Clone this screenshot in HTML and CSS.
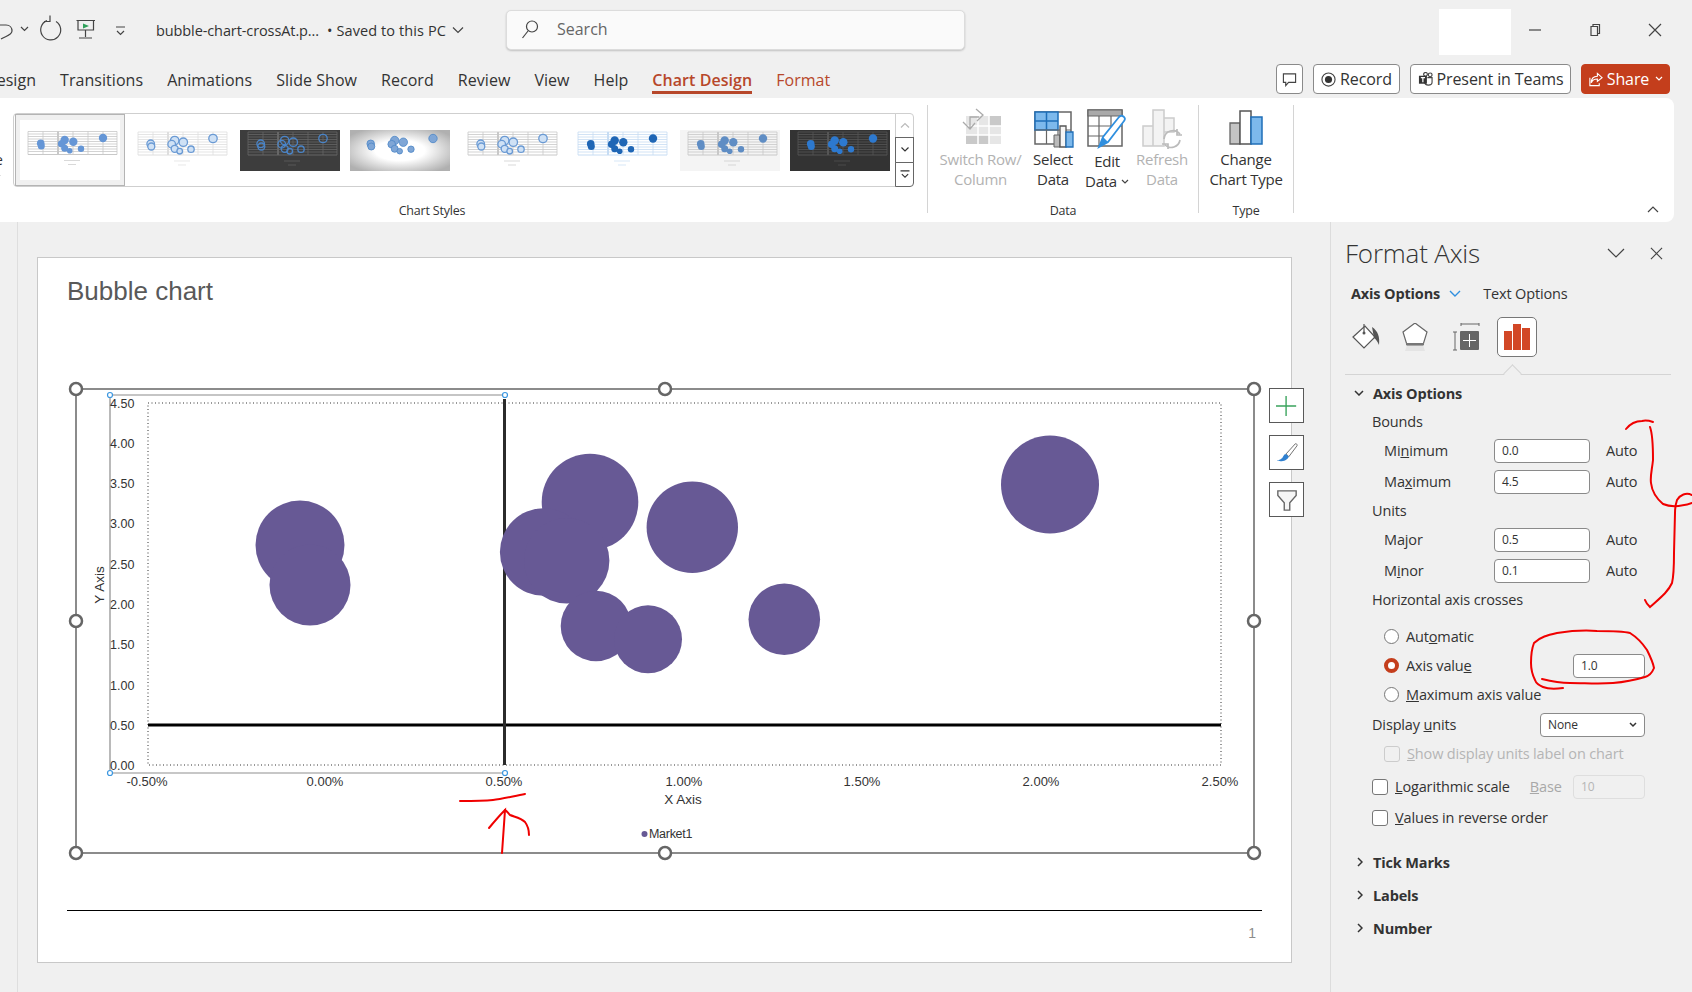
FILE: index.html
```html
<!DOCTYPE html>
<html lang="en">
<head>
  <meta charset="UTF-8" />
  <title>bubble-chart-crossAt - PowerPoint</title>
  <link rel="stylesheet" href="styles.css">
</head>
<body>
  <!-- shared parts of the chart style previews -->
  <svg class="defs" aria-hidden="true">
    <defs>
      <symbol id="mini-grid" viewBox="0 0 100 41">
        <path d="M8 2H97M8 4.500H97M8 7H97M8 9.500H97M8 12H97M8 14.500H97M8 17H97M8 19.500H97M8 22H97" stroke-width=".8"/>
        <path d="M8 2V25M23 2V25M53 2V25M68 2V25M83 2V25M97 2V25" stroke-width=".8"/>
        <path d="M38 2V25" stroke-width="2"/>
        <path d="M8 25H97" stroke-width="1"/>
        <path d="M44 31H60M48 35H56" stroke-width=".7"/>
      </symbol>
      <symbol id="mini-dots" viewBox="0 0 100 41">
        <circle cx="20.700" cy="13.800" r="3.800"/><circle cx="21.300" cy="16.500" r="3.500"/>
        <circle cx="44.700" cy="10.500" r="4.200"/><circle cx="41.700" cy="14.200" r="3.800"/>
        <circle cx="44.700" cy="18.800" r="3.500"/><circle cx="49.700" cy="21.200" r="2.800"/>
        <circle cx="53.300" cy="12.200" r="4.200"/><circle cx="61" cy="19.200" r="3.200"/>
        <circle cx="83" cy="8.500" r="4.200"/>
      </symbol>
      <radialGradient id="mini-glow" cx=".5" cy=".5" r=".62">
        <stop offset=".4" stop-color="#fff"/><stop offset="1" stop-color="#b0b0b0"/>
      </radialGradient>
    </defs>
  </svg>

  <!-- Barra de titulo -->
  <header class="titlebar">
    <svg class="quick-icons" viewBox="0 0 140 60" aria-hidden="true">
      <path d="M-3 25H6C10 25 12 28 12 31C12 35 6 36 1 39" class="ico-line"/>
      <path d="M21 27l3.500 3.500 3.500-3.500" class="ico-line"/>
      <path d="M47 20.600A10 10 0 1 0 56 21.400M50 15.500V21.500H44" class="ico-line"/>
      <path d="M76.500 20.500H95M78 20.500V30H93.500V20.500M85.500 30V37M79 38H92" class="ico-line"/>
      <path d="M83 23.500L89 26L83 28.500Z" fill="#2ea05a"/>
      <path d="M116 27H125M117 31l3.500 3.500 3.500-3.500" class="ico-line"/>
    </svg>
    <div class="doc-name">bubble-chart-crossAt.p...</div>
    <div class="doc-saved">• Saved to this PC</div>
    <svg class="doc-caret" viewBox="0 0 12 8" aria-hidden="true"><path d="M1 1.500l5 5 5-5" class="ico-line"/></svg>
    <div class="search">
      <svg class="search-ico" viewBox="0 0 18 20" aria-hidden="true"><circle cx="11" cy="7.500" r="5.500" class="ico-line"/><path d="M7 12L1.500 19" class="ico-line"/></svg>
      <span>Search</span>
    </div>
    <div class="account"></div>
    <svg class="win-ico win-min" viewBox="0 0 14 14" aria-hidden="true"><path d="M1 7H13" class="ico-line"/></svg>
    <svg class="win-ico win-max" viewBox="0 0 14 14" aria-hidden="true"><path d="M3 3.500H9.500V12.500H3ZM5 3.500V1.500H11.500V10.500H9.500" class="ico-line"/></svg>
    <svg class="win-ico win-close" viewBox="0 0 14 14" aria-hidden="true"><path d="M1 1L13 13M13 1L1 13" class="ico-line"/></svg>
  </header>

  <!-- Pestanas -->
  <nav class="tabbar">
    <div class="tabs">
      <span class="tab tab-cut">Design</span>
      <span class="tab">Transitions</span>
      <span class="tab">Animations</span>
      <span class="tab">Slide Show</span>
      <span class="tab">Record</span>
      <span class="tab">Review</span>
      <span class="tab">View</span>
      <span class="tab">Help</span>
      <span class="tab tab-on">Chart Design</span>
      <span class="tab tab-ctx">Format</span>
    </div>
    <div class="actions">
      <button class="act act-comment"><svg viewBox="0 0 16 16" class="act-ico" aria-hidden="true"><path d="M1.500 2H14.500V11H7L4 14.500V11H1.500Z" class="ico-line"/></svg></button>
      <button class="act act-record"><svg viewBox="0 0 16 16" class="act-ico" aria-hidden="true"><circle cx="8" cy="8" r="7" class="ico-line"/><circle cx="8" cy="8" r="3.800" fill="#333"/></svg>Record</button>
      <button class="act act-teams"><svg viewBox="0 0 16 16" class="act-ico" aria-hidden="true"><circle cx="13" cy="3" r="2" class="ico-line"/><circle cx="8" cy="2.500" r="2" class="ico-line"/><path d="M10 6H15V11C15 13 13 14 11 14C9 14 7.500 13 7 11" class="ico-line"/><path d="M1 4H9.500V12.500H1Z" fill="#333"/><path d="M3 6H7.500M5.200 6V11" stroke="#fff" stroke-width="1.300"/></svg>Present in Teams</button>
      <button class="act act-share"><svg viewBox="0 0 16 16" class="act-ico" aria-hidden="true"><path d="M10 1.500L15 6L10 10V7.500C6 7.500 4.500 9 3.500 11.500C3.500 7 6 4.500 10 4.500ZM2 6V14.500H12V12" class="ico-white"/></svg>Share<svg viewBox="0 0 8 6" class="share-caret" aria-hidden="true"><path d="M1 1l3 3 3-3" class="ico-white"/></svg></button>
    </div>
  </nav>

  <!-- Cinta -->
  <section class="ribbon">
    <div class="rb-group rb-styles">
      <div class="cut-off">e<svg viewBox="0 0 8 6" aria-hidden="true"><path d="M1 1l3 3 3-3" class="ico-line"/></svg></div>
      <div class="gallery">
        <div class="style-tile tile-on">
          <svg class="mini mini-plain" viewBox="0 -9.500 100 60"><use class="m-grid" href="#mini-grid" width="100" height="41"/><use class="m-dots" href="#mini-dots" width="100" height="41"/></svg>
        </div>
        <div class="style-tile">
          <svg class="mini mini-hatch" viewBox="0 0 100 41"><use class="m-grid" href="#mini-grid"/><use class="m-dots" href="#mini-dots"/></svg>
        </div>
        <div class="style-tile">
          <svg class="mini mini-dark" viewBox="0 0 100 41"><rect width="100" height="41" fill="#3d3d3d"/><use class="m-grid" href="#mini-grid"/><use class="m-dots" href="#mini-dots"/></svg>
        </div>
        <div class="style-tile">
          <svg class="mini mini-glow" viewBox="0 0 100 41"><rect width="100" height="41" fill="url(#mini-glow)"/><use class="m-dots" href="#mini-dots"/></svg>
        </div>
        <div class="style-tile">
          <svg class="mini mini-ring" viewBox="0 0 100 41"><use class="m-grid" href="#mini-grid"/><use class="m-dots" href="#mini-dots"/></svg>
        </div>
        <div class="style-tile">
          <svg class="mini mini-solid" viewBox="0 0 100 41"><use class="m-grid" href="#mini-grid"/><use class="m-dots" href="#mini-dots"/></svg>
        </div>
        <div class="style-tile">
          <svg class="mini mini-soft" viewBox="0 0 100 41"><use class="m-grid" href="#mini-grid"/><use class="m-dots" href="#mini-dots"/></svg>
        </div>
        <div class="style-tile">
          <svg class="mini mini-night" viewBox="0 0 100 41"><rect width="100" height="41" fill="#333"/><use class="m-grid" href="#mini-grid"/><use class="m-dots" href="#mini-dots"/></svg>
        </div>
        <div class="gallery-scroll">
          <span class="scroll-btn scroll-off"><svg viewBox="0 0 10 6" aria-hidden="true"><path d="M1 5l4-4 4 4"/></svg></span>
          <span class="scroll-btn"><svg viewBox="0 0 10 6" aria-hidden="true"><path d="M1.500 1l3.500 3.500L8.500 1"/></svg></span>
          <span class="scroll-btn"><svg viewBox="0 0 10 10" aria-hidden="true"><path d="M0 1H10M1.500 4.500L5 8L8.500 4.500"/></svg></span>
        </div>
      </div>
      <div class="rb-label rb-label-styles">Chart Styles</div>
    </div>

    <div class="rb-group rb-data">
      <div class="rb-items">
        <div class="rb-btn rb-off w-switch">
          <svg class="rb-ico" viewBox="0 0 44 42" aria-hidden="true">
            <path d="M7 8H42V36H7Z" fill="#e6e6e6"/><path d="M7 27H30V36H7ZM30 8H42V18H30Z" fill="#c9c9c9"/>
            <path d="M7 18H42M7 27H42M19 8V36M30 8V36" stroke="#fff" stroke-width="1.500"/>
            <path d="M4 14L11 21L16 15M11 20V9H20M17 1L24 7L18 13" fill="none" stroke="#aaa" stroke-width="1.300"/>
          </svg>
          <span>Switch Row/<br>Column</span>
        </div>
        <div class="rb-btn w-select">
          <svg class="rb-ico" viewBox="0 0 44 42" aria-hidden="true">
            <path d="M4 4H40V36H4Z" fill="#fff" stroke="#666" stroke-width="1.500"/>
            <path d="M4 4H27V22H4Z" fill="#7db9ec" stroke="#1f6fb8" stroke-width="1.500"/>
            <path d="M15.500 4V22M4 13H27" stroke="#1f6fb8" stroke-width="1.500"/>
            <path d="M27 22V36M15.500 22V36M4 22H40" stroke="#666" stroke-width="1.200"/>
            <path d="M23 27H29V39H23Z" fill="#bbb" stroke="#666"/><path d="M29 18H35V39H29Z" fill="#f5f5f5" stroke="#555" stroke-width="1.300"/>
            <path d="M35 24H42V39H35Z" fill="#7db9ec" stroke="#1f6fb8" stroke-width="1.300"/>
          </svg>
          <span>Select<br>Data</span>
        </div>
        <div class="rb-btn w-edit">
          <svg class="rb-ico" viewBox="0 0 44 42" aria-hidden="true">
            <path d="M3 2H37V38H3Z" fill="#fff" stroke="#666" stroke-width="1.500"/>
            <path d="M3 2H37V8H3Z" fill="#aaa" stroke="#666" stroke-width="1.200"/>
            <path d="M3 18H37M3 28H27M14 8V38M26 8V30" stroke="#666" stroke-width="1.200"/>
            <path d="M14 39L18 29L34 9C37 6 42 10 39 13L23 34Z" fill="#fff" stroke="#2f8fdf" stroke-width="1.800"/>
            <path d="M14 39L18 29L23 34Z" fill="#2f8fdf"/>
          </svg>
          <span class="edit-text">Edit<br>Data<svg class="data-caret" viewBox="0 0 8 6" aria-hidden="true"><path d="M1 1l3 3 3-3" class="ico-line"/></svg></span>
        </div>
        <div class="rb-btn rb-off w-refresh">
          <svg class="rb-ico" viewBox="0 0 44 42" aria-hidden="true">
            <path d="M3 18H13V38H3ZM13 2H24V38H13ZM24 10H34V24H24Z" fill="#f3f3f3" stroke="#ccc" stroke-width="1.500"/>
            <path d="M24 31A9 9 0 0 1 40 26M40 32A9 9 0 0 1 25 37M37 21V27H42M28 41V36H22" fill="none" stroke="#bbb" stroke-width="1.700"/>
          </svg>
          <span>Refresh<br>Data</span>
        </div>
      </div>
      <div class="rb-label rb-label-data">Data</div>
    </div>

    <div class="rb-group rb-type">
      <div class="rb-items">
        <div class="rb-btn w-type">
          <svg class="rb-ico" viewBox="0 0 44 42" aria-hidden="true">
            <path d="M6 15H16V36H6Z" fill="#c4c4c4" stroke="#666" stroke-width="1.300"/>
            <path d="M16 3H27V36H16Z" fill="#fff" stroke="#555" stroke-width="1.500"/>
            <path d="M27 9H38V36H27Z" fill="#7db9ec" stroke="#1f6fb8" stroke-width="1.500"/>
          </svg>
          <span>Change<br>Chart Type</span>
        </div>
      </div>
      <div class="rb-label">Type</div>
    </div>

    <svg class="rb-collapse" viewBox="0 0 12 7" aria-hidden="true"><path d="M1 6l5-5 5 5" class="ico-line"/></svg>
  </section>

  <main class="workspace">
    <div class="thumb-pane"></div>

    <div class="stage">
      <article class="slide">
        <h1 class="slide-title">Bubble chart</h1>

        <div class="chart-wrap">
          <svg class="chart" viewBox="70 383 1190 475" role="img" aria-label="Bubble chart">
            <path d="M76 389H1254V853H76Z" class="frame"/>
            <path d="M110 395H505M110 395V773" class="axis-box"/>
            <path d="M110 773H505" class="axis-box-low"/>
            <rect x="148" y="403" width="1073" height="362" class="plot"/>

            <path d="M148 725H1221" class="cross-h"/>
            <path d="M504.500 399V765" class="cross-v"/>

            <g class="bubbles">
              <circle cx="300" cy="545" r="44.500"/>
              <circle cx="310" cy="585" r="40.500"/>
              <circle cx="590" cy="502" r="48.300"/>
              <circle cx="543.700" cy="552" r="43.800"/>
              <circle cx="566.700" cy="560.700" r="42.700"/>
              <circle cx="692.300" cy="527.300" r="45.700"/>
              <circle cx="596" cy="626" r="35.300"/>
              <circle cx="648" cy="639.300" r="34"/>
              <circle cx="784.300" cy="619.300" r="35.800"/>
              <circle cx="1050" cy="484.500" r="49"/>
            </g>

            <g class="tick-y">
              <text x="110" y="404">4.50</text>
              <text x="110" y="444">4.00</text>
              <text x="110" y="484">3.50</text>
              <text x="110" y="524">3.00</text>
              <text x="110" y="565">2.50</text>
              <text x="110" y="605">2.00</text>
              <text x="110" y="645">1.50</text>
              <text x="110" y="686">1.00</text>
              <text x="110" y="726">0.50</text>
              <text x="110" y="766">0.00</text>
            </g>
            <g class="tick-x">
              <text x="147" y="781">-0.50%</text>
              <text x="325" y="781">0.00%</text>
              <text x="504" y="781">0.50%</text>
              <text x="684" y="781">1.00%</text>
              <text x="862" y="781">1.50%</text>
              <text x="1041" y="781">2.00%</text>
              <text x="1220" y="781">2.50%</text>
            </g>
            <text x="683" y="799" class="axis-title">X Axis</text>
            <text class="axis-title" transform="translate(99 585) rotate(-90)">Y Axis</text>
            <circle cx="644.500" cy="834" r="3" class="legend-dot"/>
            <text x="649" y="834" class="legend">Market1</text>

            <g class="sel-dots">
              <circle cx="110" cy="395" r="2.500"/><circle cx="505" cy="395" r="2.500"/>
              <circle cx="110" cy="773" r="2.500"/><circle cx="505" cy="773" r="2.500"/>
            </g>
            <g class="handles">
              <circle cx="76" cy="389" r="6"/><circle cx="665" cy="389" r="6"/><circle cx="1254" cy="389" r="6"/>
              <circle cx="76" cy="621" r="6"/><circle cx="1254" cy="621" r="6"/>
              <circle cx="76" cy="853" r="6"/><circle cx="665" cy="853" r="6"/><circle cx="1254" cy="853" r="6"/>
            </g>
          </svg>

          <div class="chart-tools">
            <span class="tool"><svg viewBox="0 0 24 24" aria-hidden="true"><path d="M11 1V23M0 12H22" stroke="#3aa35c" stroke-width="1.500"/></svg></span>
            <span class="tool"><svg viewBox="0 0 24 24" aria-hidden="true"><path d="M21 2L11 13L14 16L23 4C23 2 22 1.500 21 2Z" fill="#fff" stroke="#666"/><path d="M11 13C8 13 8 17 6 18C5 19 3 20 1 20C4 22 12 21 14 16Z" fill="#2f80d0"/></svg></span>
            <span class="tool"><svg viewBox="0 0 24 24" aria-hidden="true"><path d="M2 2H22V7L15 15V23H9V15L2 7Z" fill="#f6f6f6" stroke="#666" stroke-width="1.500"/></svg></span>
          </div>
        </div>

        <footer class="slide-foot">
          <span class="page-no">1</span>
        </footer>
      </article>
    </div>

    <!-- Panel lateral -->
    <aside class="panel">
      <div class="panel-head">
        <span class="panel-title">Format Axis</span>
        <svg class="panel-ctl ctl-caret" viewBox="0 0 18 10" aria-hidden="true"><path d="M1 1l8 8 8-8" class="ico-line"/></svg>
        <svg class="panel-ctl ctl-close" viewBox="0 0 14 14" aria-hidden="true"><path d="M1 1L13 13M13 1L1 13" class="ico-line"/></svg>
      </div>
      <div class="panel-modes">
        <b>Axis Options</b>
        <svg class="mode-caret" viewBox="0 0 12 7" aria-hidden="true"><path d="M1 1l5 5 5-5"/></svg>
        <span>Text Options</span>
      </div>
      <div class="panel-icons">
        <span class="p-ico p-ico-fill"><svg viewBox="0 0 28 28" aria-hidden="true"><path d="M1 14L13 3L23 14L12 25Z" fill="#fff" stroke="#555" stroke-width="1.200"/><path d="M12 1V10" stroke="#555" stroke-width="1.200"/><circle cx="12" cy="10" r="1.500" fill="#555"/><path d="M20 4C26 8 28 14 27 22C25 18 24 16 22 15Z" fill="#555"/></svg></span>
        <span class="p-ico p-ico-shape"><svg viewBox="0 0 28 28" aria-hidden="true"><path d="M6 22L4 28H24L22 22Z" fill="#e4e4e4"/><path d="M14 0L26 9L22 22H6L2 9Z" fill="#fff" stroke="#666" stroke-width="1.200"/><path d="M5 21H23" stroke="#777" stroke-width="2"/></svg></span>
        <span class="p-ico p-ico-size"><svg viewBox="0 0 28 28" aria-hidden="true"><path d="M9 1H27M9 0V3M27 0V3M1 9H5M1 27H5M3 9V27" stroke="#666" fill="none"/><rect x="8" y="8" width="19" height="19" rx="1" fill="#666"/><path d="M17.500 11V24M11 17.500H24" stroke="#fff"/></svg></span>
        <span class="p-ico p-ico-bars"><svg viewBox="0 0 28 28" aria-hidden="true"><path d="M1 8H9V27H1ZM10 1H18V27H10ZM19 5H27V27H19Z" fill="#d24726"/></svg></span>
      </div>
      <div class="panel-rule"></div>

      <div class="sec-head sec-open">
        <svg viewBox="0 0 10 6" aria-hidden="true"><path d="M1 1l4 4 4-4" class="ico-dark"/></svg>
        <b>Axis Options</b>
      </div>
      <div class="f-sub f-bounds">Bounds</div>
      <div class="f-row"><label>Mi<u>n</u>imum</label><span class="field">0.0</span><span class="f-auto">Auto</span></div>
      <div class="f-row"><label>Ma<u>x</u>imum</label><span class="field">4.5</span><span class="f-auto">Auto</span></div>
      <div class="f-sub">Units</div>
      <div class="f-row"><label>Ma<u>j</u>or</label><span class="field">0.5</span><span class="f-auto">Auto</span></div>
      <div class="f-row"><label>M<u>i</u>nor</label><span class="field">0.1</span><span class="f-auto">Auto</span></div>
      <div class="f-sub">Horizontal axis crosses</div>

      <div class="f-radio f-radio-first"><span class="radio"></span><span>Aut<u>o</u>matic</span></div>
      <div class="f-radio"><span class="radio radio-on"></span><span>Axis valu<u>e</u></span><span class="field field-wide">1.0</span></div>
      <div class="f-radio"><span class="radio"></span><span><u>M</u>aximum axis value</span></div>

      <div class="f-units"><span>Display <u>u</u>nits</span><span class="select">None<svg viewBox="0 0 8 6" aria-hidden="true"><path d="M1 1l3 3 3-3" class="ico-dark"/></svg></span></div>
      <div class="f-check f-check-sub f-disabled"><span class="check"></span><span><u>S</u>how display units label on chart</span></div>
      <div class="f-check f-check-log"><span class="check check-on"></span><span><u>L</u>ogarithmic scale</span><span class="f-base"><u>B</u>ase</span><span class="field field-wide field-off">10</span></div>
      <div class="f-check"><span class="check check-on"></span><span><u>V</u>alues in reverse order</span></div>

      <div class="sec-head sec-closed sec-first"><svg viewBox="0 0 6 10" aria-hidden="true"><path d="M1 1l4 4-4 4" class="ico-dark"/></svg><b>Tick Marks</b></div>
      <div class="sec-head sec-closed"><svg viewBox="0 0 6 10" aria-hidden="true"><path d="M1 1l4 4-4 4" class="ico-dark"/></svg><b>Labels</b></div>
      <div class="sec-head sec-closed"><svg viewBox="0 0 6 10" aria-hidden="true"><path d="M1 1l4 4-4 4" class="ico-dark"/></svg><b>Number</b></div>
    </aside>
  </main>

  <!-- Anotaciones a mano encima de la captura -->
  <svg class="scribbles" viewBox="0 0 1692 992" aria-hidden="true">
    <path d="M1626 429C1630 424 1636 421 1642 421C1646 420 1650 421 1653 422"/>
    <path d="M1650 427C1653 435 1653 448 1653 460C1652 470 1650 476 1651 483C1652 492 1656 498 1663 504C1670 507 1680 507 1692 503"/>
    <path d="M1692 495C1686 492 1680 495 1677 500C1675 506 1675 510 1675 513L1674 553C1674 565 1674 575 1672 583C1668 592 1660 598 1650 607C1648 605 1646 603 1645 600"/>
    <path d="M1563 688C1555 689 1548 689 1543 687C1538 685 1536 683 1535 680C1532 674 1531 668 1531 663C1531 655 1532 648 1534 643C1540 637 1548 635 1557 633C1570 631 1585 630 1597 631C1610 631 1622 631 1630 633C1638 638 1643 644 1647 650C1650 656 1653 662 1654 668C1652 673 1649 676 1645 677C1635 680 1625 682 1613 683C1598 684 1585 683 1570 683C1560 683 1550 681 1542 679"/>
    <path d="M460 801C472 801 483 801 493 800C502 799 514 796 525 794"/>
    <path d="M502 853C503 838 504 824 505 810C500 815 494 822 489 828"/>
    <path d="M505 810C507 811 508 813 510 815C515 817 521 818 525 822C528 826 529 830 529 835"/>
  </svg>
</body>
</html>
```

FILE: styles.css
```css
/* Colores de la ventana */
:root {
  --chrome: #f0f0f0;
  --ink: #333333;
  --accent: #b7472a;
  --share: #c43e1c;
  --line: #d4d4d4;
  --ui-font: "Open Sans", "Noto Sans", sans-serif;
  --chart-font: "Liberation Sans", Arial, sans-serif;
}

html, body {
  height: 100%;
  margin: 0;
}
body {
  position: relative;
  display: flex;
  flex-direction: column;
  width: 1692px;
  height: 992px;
  overflow: hidden;
  background-color: var(--chrome);
  color: var(--ink);
  font-family: var(--ui-font);
  font-size: 14px;
}

.defs {
  position: absolute;
  width: 0;
  height: 0;
}

.ico-line {
  fill: none;
  stroke: #444;
  stroke-width: 1.2;
}
.ico-dark {
  fill: none;
  stroke: #333;
  stroke-width: 1.5;
}
.ico-white {
  fill: none;
  stroke: #fff;
  stroke-width: 1.2;
}

/* Barra de titulo */
.titlebar {
  display: flex;
  align-items: center;
  flex: none;
  height: 60px;
}
.quick-icons {
  flex: none;
  width: 140px;
  height: 60px;
}
.doc-name {
  margin-left: 16px;
  font-size: 14.5px;
  letter-spacing: -0.1px;
  white-space: nowrap;
}
.doc-saved {
  margin-left: 8px;
  font-size: 14.5px;
  letter-spacing: 0.1px;
  white-space: nowrap;
}
.doc-caret {
  width: 12px;
  height: 8px;
  margin-left: 6px;
}
.search {
  display: flex;
  align-items: center;
  flex: none;
  box-sizing: border-box;
  width: 459px;
  height: 40px;
  margin-left: 42px;
  padding: 0 0 2px 14px;
  border: 1px solid #dcdcdc;
  border-radius: 5px;
  background-color: #fafafa;
  box-shadow: 0 1px 2px rgba(0, 0, 0, 0.2);
  color: #666;
  font-size: 16px;
}
.search-ico {
  width: 18px;
  height: 20px;
  margin-right: 18px;
}
.account {
  flex: none;
  width: 72px;
  height: 46px;
  margin: 4px 0 0 474px;
  background-color: #fff;
}
.win-ico {
  flex: none;
  width: 14px;
  height: 14px;
}
.win-min {
  margin-left: 17px;
}
.win-max {
  margin-left: 46px;
}
.win-close {
  margin-left: 46px;
}

/* Pestanas */
.tabbar {
  display: flex;
  align-items: center;
  justify-content: space-between;
  flex: none;
  height: 38px;
  overflow: hidden;
}
.tabs {
  display: flex;
  align-items: center;
  gap: 24px;
  height: 100%;
  margin: 2px 0 0 -15px;
}
.tab {
  position: relative;
  font-size: 16px;
  letter-spacing: 0.05px;
  white-space: nowrap;
}
.tab-on {
  color: var(--accent);
  font-weight: 600;
}
.tab-on::after {
  content: "";
  position: absolute;
  left: 0;
  right: 0;
  bottom: -3px;
  height: 3px;
  background-color: var(--accent);
}
.tab-ctx {
  color: var(--accent);
}
.actions {
  display: flex;
  gap: 10px;
  margin-right: 22px;
}
.act {
  display: flex;
  align-items: center;
  justify-content: center;
  box-sizing: border-box;
  height: 30px;
  padding: 0;
  border: 1px solid #8a8a8a;
  border-radius: 4px;
  background-color: #fff;
  color: var(--ink);
  font-family: var(--ui-font);
  font-size: 16px;
  letter-spacing: -0.1px;
}
.act-ico {
  width: 15px;
  height: 15px;
  margin-right: 4px;
}
.act-comment {
  width: 27px;
}
.act-comment .act-ico {
  margin: 0;
}
.act-record {
  width: 87px;
}
.act-teams {
  width: 161px;
}
.act-share {
  width: 89px;
  border-color: var(--share);
  background-color: var(--share);
  color: #fff;
}
.share-caret {
  width: 8px;
  height: 6px;
  margin-left: 6px;
}

/* Cinta */
.ribbon {
  position: relative;
  display: flex;
  flex: none;
  box-sizing: border-box;
  height: 124px;
  margin-right: 18px;
  padding-top: 7px;
  border-radius: 0 8px 8px 0;
  background-color: #fff;
}
.rb-group {
  display: flex;
  flex-direction: column;
  box-sizing: border-box;
  height: 108px;
  border-right: 1px solid var(--line);
}
.rb-label {
  margin-top: auto;
  font-size: 12.5px;
  line-height: 16px;
  text-align: center;
  letter-spacing: -0.2px;
  transform: translateY(6px);
}
.rb-styles {
  position: relative;
  width: 928px;
  padding: 8px 0 0 13px;
}
.rb-label-styles {
  padding-right: 76px;
}
.cut-off {
  position: absolute;
  left: -5px;
  top: 45px;
  width: 10px;
  font-size: 14px;
  line-height: 20px;
}
.cut-off svg {
  display: block;
  width: 8px;
  height: 6px;
  margin: 4px 0 0 -2px;
}
.gallery {
  display: flex;
  box-sizing: border-box;
  width: 900px;
  height: 74px;
  padding-left: 1px;
  border: 1px solid #cfcfcf;
  border-radius: 4px;
}
.style-tile {
  display: flex;
  align-items: center;
  justify-content: center;
  flex: none;
  box-sizing: border-box;
  width: 110px;
  height: 72px;
}
.tile-on {
  border: 1px solid #b4b4b4;
  background-color: #f0f0f0;
}
.mini {
  width: 100px;
  height: 41px;
  filter: blur(0.4px);
}
.m-grid {
  fill: none;
  stroke: #c8c8c8;
}
.mini-plain {
  height: 60px;
  background-color: #fff;
}
.mini-plain .m-dots {
  fill: #6596d6;
}
.mini-hatch .m-dots, .mini-ring .m-dots {
  fill: #cfe1f5;
  stroke: #6a9ad4;
  stroke-width: 1.3;
}
.mini-hatch .m-grid {
  stroke: #dedede;
}
.mini-dark .m-grid {
  stroke: #666;
}
.mini-dark .m-dots {
  fill: none;
  stroke: #4a85c9;
  stroke-width: 1.3;
}
.mini-glow .m-dots {
  fill: #7fa6d6;
  stroke: #4d86c6;
  stroke-width: 0.8;
}
.mini-solid .m-dots {
  fill: #1f66b5;
}
.mini-solid .m-grid {
  stroke: #c6dcf3;
}
.mini-soft {
  background-color: #f4f4f4;
}
.mini-soft .m-dots {
  fill: #5f8dc4;
}
.mini-night .m-dots {
  fill: #2d79cf;
}
.mini-night .m-grid {
  stroke: #555;
}
.gallery-scroll {
  display: flex;
  flex-direction: column;
  flex: none;
  box-sizing: border-box;
  width: 19px;
  height: 74px;
  margin: -1px -1px 0 auto;
}
.scroll-btn {
  display: flex;
  align-items: center;
  justify-content: center;
  flex: 1;
  border: 1px solid #666;
  background-color: #fff;
}
.scroll-btn + .scroll-btn {
  margin-top: -1px;
}
.scroll-btn:last-child {
  border-radius: 0 0 4px 0;
}
.scroll-off {
  border-color: #cfcfcf;
  border-radius: 0 4px 0 0;
}
.scroll-btn svg {
  width: 10px;
  height: 9px;
  fill: none;
  stroke: #333;
  stroke-width: 1.2;
}
.scroll-off svg {
  stroke: #bbb;
}

.rb-data {
  width: 271px;
  padding-left: 5px;
}
.rb-label-data {
  padding-right: 5px;
}
.rb-type {
  width: 95px;
}
.rb-items {
  display: flex;
  margin-top: 3px;
}
.rb-btn {
  display: flex;
  flex-direction: column;
  align-items: center;
  flex: none;
  font-size: 15px;
  line-height: 20px;
  letter-spacing: -0.25px;
  text-align: center;
  white-space: nowrap;
}
.rb-ico {
  width: 44px;
  height: 42px;
  margin-bottom: -1px;
}
.rb-off {
  color: #b2b2b2;
}
.w-switch {
  width: 95px;
}
.w-select {
  width: 50px;
}
.w-edit {
  width: 58px;
}
.w-refresh {
  width: 52px;
}
.w-type {
  width: 94px;
}
.edit-text {
  padding-top: 2px;
}
.data-caret {
  width: 8px;
  height: 6px;
  margin-left: 4px;
  vertical-align: 2px;
}
.rb-collapse {
  position: absolute;
  right: 15px;
  top: 108px;
  width: 12px;
  height: 7px;
}

/* Zona de trabajo */
.workspace {
  display: flex;
  flex: 1;
  min-height: 0;
}
.thumb-pane {
  flex: none;
  box-sizing: border-box;
  width: 18px;
  border-right: 1px solid #dedede;
}
.stage {
  flex: none;
  box-sizing: border-box;
  width: 1312px;
  padding: 35px 0 0 19px;
}
.slide {
  position: relative;
  box-sizing: border-box;
  width: 1255px;
  height: 706px;
  border: 1px solid #c8c8c8;
  background-color: #fff;
}
.slide-title {
  margin: 16px 0 0 29px;
  color: #595959;
  font-family: var(--chart-font);
  font-size: 26px;
  font-weight: 400;
  line-height: 35px;
}
/* viewBox usa las mismas coordenadas que la pantalla */
.chart-wrap {
  position: relative;
  width: 1190px;
  height: 475px;
  margin: 74px 0 0 32px;
}
.chart {
  display: block;
  width: 1190px;
  height: 475px;
  overflow: visible;
}
.frame {
  fill: none;
  stroke: #666;
  stroke-width: 1.5;
}
.axis-box {
  fill: none;
  stroke: #8c8c8c;
  stroke-width: 1.2;
}
.axis-box-low {
  fill: none;
  stroke: #b5b5b5;
  stroke-width: 1.5;
}
.plot {
  fill: none;
  stroke: #333;
  stroke-width: 1;
  stroke-dasharray: 1 2.500;
}
.cross-h {
  stroke: #000;
  stroke-width: 3;
}
.cross-v {
  stroke: #2b2b2b;
  stroke-width: 3;
}
.bubbles circle {
  fill: #675995;
}
.tick-y text, .tick-x text, .legend, .axis-title {
  fill: #333;
  font-family: var(--chart-font);
  font-size: 12.5px;
  dominant-baseline: central;
}
.tick-x text {
  font-size: 13px;
  text-anchor: middle;
}
.axis-title {
  font-size: 13.5px;
  text-anchor: middle;
}
.legend {
  font-size: 12.5px;
  letter-spacing: -0.3px;
}
.legend-dot {
  fill: #675995;
}
.sel-dots circle {
  fill: #fff;
  stroke: #3c97e0;
  stroke-width: 1.2;
}
.handles circle {
  fill: #fff;
  stroke: #666;
  stroke-width: 2.500;
}
.chart-tools {
  position: absolute;
  left: 1199px;
  top: 5px;
  display: flex;
  flex-direction: column;
  gap: 12px;
}
.tool {
  display: flex;
  align-items: center;
  justify-content: center;
  box-sizing: border-box;
  width: 35px;
  height: 35px;
  border: 1.5px solid #595959;
  background-color: #fff;
}
.tool svg {
  width: 22px;
  height: 22px;
}
.slide-foot {
  position: relative;
  height: 40px;
  margin: 52px 29px 0 29px;
  border-top: 1px solid #000;
}
.page-no {
  position: absolute;
  right: 6px;
  top: 14px;
  color: #8c8c8c;
  font-family: var(--chart-font);
  font-size: 14px;
}

/* Panel lateral */
.panel {
  flex: 1;
  box-sizing: border-box;
  padding-left: 14px;
  border-left: 1px solid #dcdcdc;
  font-size: 14.5px;
  letter-spacing: -0.15px;
}
.panel-head {
  display: flex;
  align-items: center;
  height: 62px;
}
.panel-title {
  font-size: 26px;
  font-weight: 300;
  letter-spacing: -0.2px;
}
.panel-ctl {
  flex: none;
}
.ctl-caret {
  width: 18px;
  height: 10px;
  margin-left: 127px;
}
.ctl-close {
  width: 13px;
  height: 13px;
  margin-left: 25px;
}
.panel-modes {
  display: flex;
  align-items: center;
  height: 20px;
  margin-top: -1px;
  padding-left: 6px;
}
.mode-caret {
  width: 12px;
  height: 7px;
  margin: 0 22px 0 9px;
  fill: none;
  stroke: #2f8fdf;
  stroke-width: 1.4;
}
.panel-icons {
  display: flex;
  height: 40px;
  margin-top: 14px;
}
.p-ico {
  display: flex;
  align-items: center;
  justify-content: center;
  box-sizing: border-box;
  flex: none;
  width: 40px;
  height: 40px;
}
.p-ico svg {
  width: 28px;
  height: 28px;
}
.p-ico-fill {
  margin-left: 1px;
}
.p-ico-shape {
  margin-left: 9px;
}
.p-ico-size {
  margin-left: 11px;
}
.p-ico-bars {
  margin-left: 11px;
  border: 1px solid #777;
  border-radius: 5px;
  background-color: #fff;
}
.panel-rule {
  position: relative;
  width: 326px;
  height: 17px;
  border-bottom: 1px solid var(--line);
}
.panel-rule::after {
  content: "";
  position: absolute;
  left: 161px;
  bottom: -6px;
  width: 12px;
  height: 12px;
  border-top: 1px solid var(--line);
  border-left: 1px solid var(--line);
  background-color: var(--chrome);
  transform: rotate(45deg);
}
.sec-head {
  display: flex;
  align-items: center;
  height: 24px;
}
.sec-open {
  margin-top: 6px;
  padding-left: 9px;
}
.sec-open svg {
  width: 10px;
  height: 6px;
  margin-right: 9px;
}
.sec-closed {
  height: 33px;
  padding-left: 12px;
}
.sec-closed svg {
  width: 6px;
  height: 10px;
  margin-right: 10px;
}
.sec-first {
  margin-top: 12px;
}
.f-sub {
  display: flex;
  align-items: center;
  height: 27px;
  padding-left: 27px;
}
.f-bounds {
  margin-top: 3px;
}
.f-row {
  display: flex;
  align-items: center;
  height: 31px;
  padding-left: 39px;
}
.f-row label {
  width: 110px;
}
.field {
  display: flex;
  align-items: center;
  box-sizing: border-box;
  width: 96px;
  height: 24px;
  padding-left: 7px;
  border: 1px solid #8a8a8a;
  border-radius: 4px;
  background-color: #fff;
  font-size: 12px;
}
.f-auto {
  margin-left: 16px;
}
.f-radio {
  display: flex;
  align-items: center;
  height: 29px;
  padding-left: 39px;
}
.f-radio-first {
  margin-top: 9px;
}
.radio {
  flex: none;
  box-sizing: border-box;
  width: 15px;
  height: 15px;
  margin-right: 7px;
  border: 1px solid #777;
  border-radius: 50%;
  background-color: #fff;
}
.radio-on {
  border: 4px solid var(--share);
}
.field-wide {
  width: 72px;
  margin-left: auto;
  margin-right: 47px;
}
.f-units {
  display: flex;
  align-items: center;
  justify-content: space-between;
  height: 30px;
  margin-top: 0.5px;
  padding: 0 47px 0 27px;
}
.select {
  display: flex;
  align-items: center;
  justify-content: space-between;
  box-sizing: border-box;
  width: 105px;
  height: 24px;
  padding: 0 7px;
  border: 1px solid #8a8a8a;
  border-radius: 4px;
  background-color: #fff;
  font-size: 12px;
}
.select svg {
  width: 8px;
  height: 6px;
}
.f-check {
  display: flex;
  align-items: center;
  height: 32px;
  padding-left: 27px;
}
.f-check-sub {
  height: 28px;
  margin-bottom: 3px;
  padding-left: 39px;
}
.f-check-log {
  margin-bottom: -1px;
}
.f-disabled {
  color: #b5b5b5;
}
.check {
  flex: none;
  box-sizing: border-box;
  width: 16px;
  height: 16px;
  margin-right: 7px;
  border: 1px solid #ccc;
  border-radius: 3px;
}
.check-on {
  border-color: #777;
  background-color: #fff;
}
.f-base {
  margin-left: 20px;
  color: #a8a8a8;
}
.field-off {
  margin-right: 47px;
  border-color: #dedede;
  background-color: transparent;
  color: #b5b5b5;
}

/* Trazos a mano alzada */
.scribbles {
  position: absolute;
  left: 0;
  top: 0;
  width: 1692px;
  height: 992px;
  fill: none;
  stroke: #f00000;
  stroke-width: 2;
  stroke-linecap: round;
  pointer-events: none;
}
```
